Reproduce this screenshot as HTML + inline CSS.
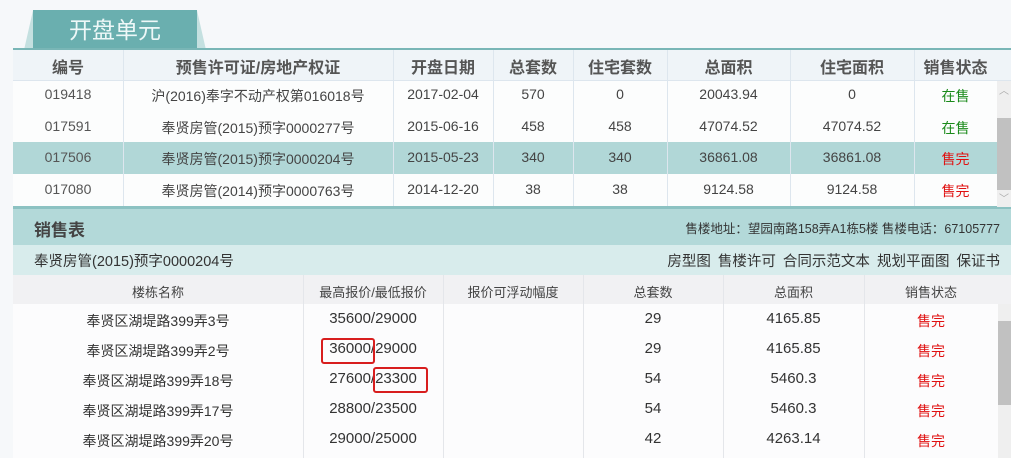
<!DOCTYPE html>
<html><head><meta charset="utf-8"><style>
*{margin:0;padding:0;box-sizing:border-box}
body{width:1011px;height:458px;overflow:hidden;background:#f6f8fa;font-family:"Liberation Sans","Noto Sans CJK SC",sans-serif;color:#333;position:relative}
.a{position:absolute}
.c{position:absolute;text-align:center;white-space:nowrap}
.vl{position:absolute;width:1px;background:#dde6ee}
</style></head><body>
<!-- tab -->
<div class="a" style="left:24px;top:10px;width:182px;height:40px;background:#c4e0e0;clip-path:polygon(5% 0,95% 0,100% 100%,0 100%)"></div>
<div class="a" style="left:33px;top:10px;width:164px;height:40px;background:#6aafaf"></div>
<div class="c" style="left:33px;top:13px;width:164px;font-size:23px;color:#eef8f8;line-height:34px">开盘单元</div>
<div class="a" style="left:13px;top:48px;width:998px;height:2px;background:#79b6b6"></div>
<!-- top table -->
<div class="a" style="left:13px;top:50px;width:998px;height:31px;background:#eff4f8;border-bottom:1px solid #dde6ee"></div>
<div class="a" style="left:13px;top:81px;width:984px;height:126px;background:#fcfdfd"></div>
<div class="a" style="left:13px;top:142px;width:984px;height:32px;background:#b1d7d7"></div>
<div class="a" style="left:13px;top:206px;width:998px;height:3px;background:#8cc2c2"></div>
<div class="vl" style="left:123px;top:50px;height:156px"></div>
<div class="vl" style="left:393px;top:50px;height:156px"></div>
<div class="vl" style="left:493px;top:50px;height:156px"></div>
<div class="vl" style="left:573px;top:50px;height:156px"></div>
<div class="vl" style="left:667px;top:50px;height:156px"></div>
<div class="vl" style="left:790px;top:50px;height:156px"></div>
<div class="vl" style="left:914px;top:50px;height:156px"></div>
<div class="a" style="left:997px;top:81px;width:14px;height:126px;background:#efefef"></div>
<div class="a" style="left:997px;top:118px;width:14px;height:72px;background:#c1c1c1"></div>
<div class="c" style="left:997px;top:82px;width:14px;font-size:10px;color:#aaa">︿</div>
<div class="c" style="left:997px;top:190px;width:14px;font-size:10px;color:#aaa">﹀</div>
<div style="font-size:16px;font-weight:bold;color:#555">
<div class="c" style="left:13px;top:54px;width:110px">编号</div>
<div class="c" style="left:123px;top:54px;width:270px">预售许可证/房地产权证</div>
<div class="c" style="left:393px;top:54px;width:100px">开盘日期</div>
<div class="c" style="left:493px;top:54px;width:80px">总套数</div>
<div class="c" style="left:573px;top:54px;width:94px">住宅套数</div>
<div class="c" style="left:667px;top:54px;width:123px">总面积</div>
<div class="c" style="left:790px;top:54px;width:124px">住宅面积</div>
<div class="c" style="left:914px;top:54px;width:83px">销售状态</div>
</div>
<div style="font-size:14px;color:#444">
<div class="c" style="left:13px;top:86px;width:110px;color:#555">019418</div><div class="c" style="left:123px;top:86px;width:270px">沪(2016)奉字不动产权第016018号</div><div class="c" style="left:393px;top:86px;width:100px">2017-02-04</div><div class="c" style="left:493px;top:86px;width:80px">570</div><div class="c" style="left:573px;top:86px;width:94px">0</div><div class="c" style="left:667px;top:86px;width:123px">20043.94</div><div class="c" style="left:790px;top:86px;width:124px">0</div><div class="c" style="left:914px;top:86px;width:83px;color:#1a8a1a;font-size:14px">在售</div>
<div class="c" style="left:13px;top:118px;width:110px;color:#555">017591</div><div class="c" style="left:123px;top:118px;width:270px">奉贤房管(2015)预字0000277号</div><div class="c" style="left:393px;top:118px;width:100px">2015-06-16</div><div class="c" style="left:493px;top:118px;width:80px">458</div><div class="c" style="left:573px;top:118px;width:94px">458</div><div class="c" style="left:667px;top:118px;width:123px">47074.52</div><div class="c" style="left:790px;top:118px;width:124px">47074.52</div><div class="c" style="left:914px;top:118px;width:83px;color:#1a8a1a;font-size:14px">在售</div>
<div class="c" style="left:13px;top:149px;width:110px;color:#555">017506</div><div class="c" style="left:123px;top:149px;width:270px">奉贤房管(2015)预字0000204号</div><div class="c" style="left:393px;top:149px;width:100px">2015-05-23</div><div class="c" style="left:493px;top:149px;width:80px">340</div><div class="c" style="left:573px;top:149px;width:94px">340</div><div class="c" style="left:667px;top:149px;width:123px">36861.08</div><div class="c" style="left:790px;top:149px;width:124px">36861.08</div><div class="c" style="left:914px;top:149px;width:83px;color:#e01010;font-size:14px">售完</div>
<div class="c" style="left:13px;top:181px;width:110px;color:#555">017080</div><div class="c" style="left:123px;top:181px;width:270px">奉贤房管(2014)预字0000763号</div><div class="c" style="left:393px;top:181px;width:100px">2014-12-20</div><div class="c" style="left:493px;top:181px;width:80px">38</div><div class="c" style="left:573px;top:181px;width:94px">38</div><div class="c" style="left:667px;top:181px;width:123px">9124.58</div><div class="c" style="left:790px;top:181px;width:124px">9124.58</div><div class="c" style="left:914px;top:181px;width:83px;color:#e01010;font-size:14px">售完</div>
</div>
<!-- sales table -->
<div class="a" style="left:13px;top:209px;width:998px;height:36px;background:#b3d9d9"></div>
<div class="a" style="left:34px;top:216px;font-size:17px;font-weight:bold;color:#444">销售表</div>
<div class="a" style="right:11px;top:218px;font-size:12.5px;color:#333;white-space:nowrap">售楼地址：望园南路158弄A1栋5楼 售楼电话：67105777</div>
<div class="a" style="left:13px;top:245px;width:998px;height:30px;background:#d8ecec"></div>
<div class="a" style="left:34px;top:250px;font-size:14.5px;color:#333">奉贤房管(2015)预字0000204号</div>
<div class="a" style="right:11px;top:250px;font-size:14.5px;color:#333;white-space:nowrap;word-spacing:3px">房型图 售楼许可 合同示范文本 规划平面图 保证书</div>
<div class="a" style="left:13px;top:275px;width:998px;height:29px;background:#f1f1f3"></div>
<div class="a" style="left:13px;top:304px;width:985px;height:154px;background:#fcfcfd"></div>
<div class="vl" style="left:303px;top:275px;height:183px;background:#e4e6ea"></div>
<div class="vl" style="left:443px;top:275px;height:183px;background:#e4e6ea"></div>
<div class="vl" style="left:583px;top:275px;height:183px;background:#e4e6ea"></div>
<div class="vl" style="left:723px;top:275px;height:183px;background:#e4e6ea"></div>
<div class="vl" style="left:864px;top:275px;height:183px;background:#e4e6ea"></div>
<div class="a" style="left:998px;top:304px;width:13px;height:154px;background:#efefef"></div>
<div class="a" style="left:998px;top:321px;width:13px;height:84px;background:#c1c1c1"></div>
<div style="font-size:13px;color:#444">
<div class="c" style="left:13px;top:282px;width:290px">楼栋名称</div><div class="c" style="left:303px;top:282px;width:140px">最高报价/最低报价</div><div class="c" style="left:443px;top:282px;width:140px">报价可浮动幅度</div><div class="c" style="left:583px;top:282px;width:140px">总套数</div><div class="c" style="left:723px;top:282px;width:141px">总面积</div><div class="c" style="left:864px;top:282px;width:134px">销售状态</div>
</div>
<div style="font-size:15px;color:#333">
<div class="c" style="left:13px;top:311px;width:290px;font-size:14px">奉贤区湖堤路399弄3号</div><div class="c" style="left:303px;top:310px;width:140px">35600/29000</div><div class="c" style="left:583px;top:310px;width:140px">29</div><div class="c" style="left:723px;top:310px;width:141px">4165.85</div><div class="c" style="left:864px;top:311px;width:134px;color:#e01010;font-size:14px">售完</div>
<div class="c" style="left:13px;top:341px;width:290px;font-size:14px">奉贤区湖堤路399弄2号</div><div class="c" style="left:303px;top:340px;width:140px">36000/29000</div><div class="c" style="left:583px;top:340px;width:140px">29</div><div class="c" style="left:723px;top:340px;width:141px">4165.85</div><div class="c" style="left:864px;top:341px;width:134px;color:#e01010;font-size:14px">售完</div>
<div class="c" style="left:13px;top:371px;width:290px;font-size:14px">奉贤区湖堤路399弄18号</div><div class="c" style="left:303px;top:370px;width:140px">27600/23300</div><div class="c" style="left:583px;top:370px;width:140px">54</div><div class="c" style="left:723px;top:370px;width:141px">5460.3</div><div class="c" style="left:864px;top:371px;width:134px;color:#e01010;font-size:14px">售完</div>
<div class="c" style="left:13px;top:401px;width:290px;font-size:14px">奉贤区湖堤路399弄17号</div><div class="c" style="left:303px;top:400px;width:140px">28800/23500</div><div class="c" style="left:583px;top:400px;width:140px">54</div><div class="c" style="left:723px;top:400px;width:141px">5460.3</div><div class="c" style="left:864px;top:401px;width:134px;color:#e01010;font-size:14px">售完</div>
<div class="c" style="left:13px;top:431px;width:290px;font-size:14px">奉贤区湖堤路399弄20号</div><div class="c" style="left:303px;top:430px;width:140px">29000/25000</div><div class="c" style="left:583px;top:430px;width:140px">42</div><div class="c" style="left:723px;top:430px;width:141px">4263.14</div><div class="c" style="left:864px;top:431px;width:134px;color:#e01010;font-size:14px">售完</div>
</div>
<div class="a" style="left:321px;top:338px;width:54px;height:26px;border:2.5px solid #d81e1e;border-radius:3px"></div>
<div class="a" style="left:373px;top:367px;width:55px;height:26px;border:2.5px solid #d81e1e;border-radius:3px"></div>
</body></html>
